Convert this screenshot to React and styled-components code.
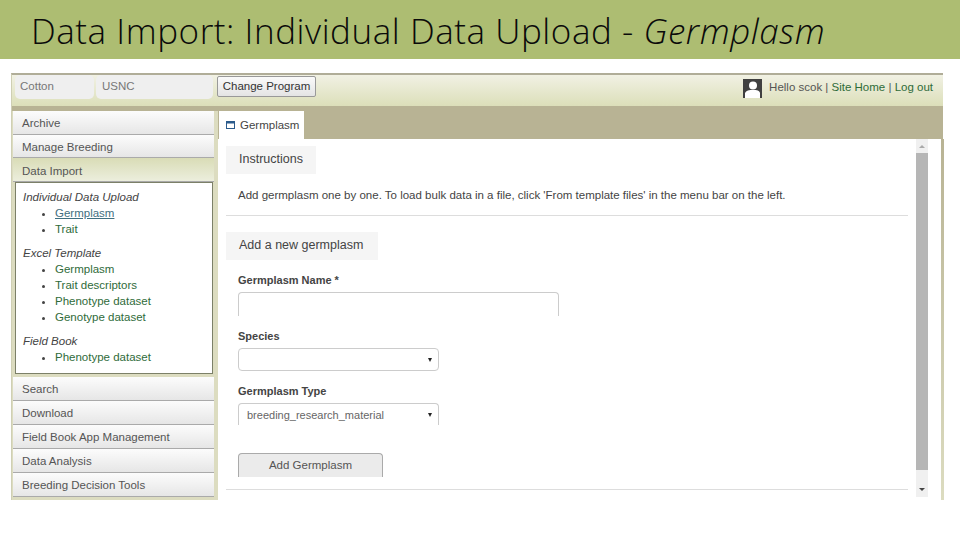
import React from 'react';
import styled, { createGlobalStyle } from 'styled-components';

const GlobalStyle = createGlobalStyle`
  html, body {
    margin: 0;
    padding: 0;
    background: #fff;
  }
  * {
    box-sizing: border-box;
  }
`;

const Slide = styled.div`
  width: 960px;
  height: 540px;
  overflow: hidden;
  background: #fff;
  font-family: "Liberation Sans", Arial, sans-serif;
  color: #333;
`;

const TitleBar = styled.header`
  height: 59px;
  background: #adbd72;
  padding-left: 31px;
  font-family: "Open Sans", sans-serif;
  font-weight: 300;
  font-size: 35px;
  letter-spacing: 0.55px;
  line-height: 62px;
  color: #0a0a0a;
  white-space: nowrap;
  em {
    font-style: italic;
  }
`;

const Shot = styled.div`
  width: 932px;
  height: 427px;
  margin: 14px 0 0 11px;
  border-top: 2px solid #b0ad98;
  border-left: 1px solid #cfcfb4;
  background: #dcdcc0;
  display: flex;
  flex-direction: column;
`;

const TopBar = styled.div`
  height: 31px;
  flex: none;
  display: flex;
  align-items: flex-start;
  padding-left: 3px;
  background: linear-gradient(#f1f1e4, #dcdfb9);
  font-size: 11.5px;
`;

const ProgramField = styled.div`
  width: ${(p) => p.$width}px;
  height: 24px;
  margin-right: 2px;
  padding: 5px 0 0 ${(p) => p.$pad}px;
  background: #efefef;
  border-radius: 5px;
  color: #777;
`;

const ChangeButton = styled.div`
  width: 99px;
  height: 21px;
  margin: 1px 0 0 2px;
  text-align: center;
  line-height: 19px;
  background: linear-gradient(#fafafa, #e4e4e4);
  border: 1px solid #999;
  border-radius: 2px;
  color: #333;
`;

const UserBox = styled.div`
  margin-left: auto;
  display: flex;
  align-items: flex-start;
  gap: 7px;
  padding: 4px 10px 0 0;
  color: #555;
  span {
    margin-top: 2px;
  }
  a {
    color: #2f6b3a;
  }
`;

const Columns = styled.div`
  flex: 1;
  min-height: 0;
  display: flex;
`;

const Sidebar = styled.nav`
  width: 206px;
  flex: none;
  padding-top: 5px;
  display: flex;
  flex-direction: column;
  background: linear-gradient(#b8b394 0 5px, #dcdcc0 5px);
`;

const SectionHead = styled.div`
  height: ${(p) => (p.$tall ? 24 : 23.5)}px;
  flex: none;
  margin: 0 4px 0 1px;
  padding: ${(p) => (p.$open ? 7 : 6)}px 0 0 9px;
  border-bottom: 1px solid #aaa;
  background: ${(p) =>
    p.$open
      ? 'linear-gradient(#d9dcb6, #eceedd)'
      : 'linear-gradient(#fcfcfc, #e6e6e6)'};
  color: #555;
  font-size: 11.5px;
`;

const MenuPanel = styled.div`
  width: 198px;
  height: 192px;
  flex: none;
  margin: 0 0 3px 3px;
  padding: 6px 0 0 7px;
  background: #fff;
  border: 1px solid #7c8068;
  font-size: 11.5px;
  line-height: 16px;
`;

const MenuTitle = styled.div`
  font-style: italic;
  color: #444;
  margin-top: ${(p) => (p.$first ? 0 : 8)}px;
`;

const MenuList = styled.ul`
  margin: 0;
  padding: 0 0 0 32px;
  list-style: disc;
  color: #444;
  a {
    color: #2f6b3a;
  }
  a.active {
    color: #3f6f80;
    text-decoration: underline;
  }
`;

const Main = styled.main`
  flex: 1;
  min-width: 0;
  display: flex;
  flex-direction: column;
`;

const TabStrip = styled.div`
  height: 33px;
  flex: none;
  padding: 5px 0 0 1px;
  background: #b8b394;
`;

const Tab = styled.div`
  width: 85px;
  height: 28px;
  display: flex;
  align-items: center;
  gap: 5px;
  padding-left: 7px;
  background: #fff;
  color: #444;
  font-size: 11.5px;
`;

const Pane = styled.div`
  flex: 1;
  min-height: 0;
  display: flex;
  background: #fff;
  border-right: 3px solid #b8b394;
  border-image: linear-gradient(#b8b394, #dcdcc0) 1;
  margin-right: -1px;
`;

const PaneContent = styled.div`
  flex: 1;
  min-width: 0;
  padding: 7px 8px 0 8px;
`;

const Panel = styled.section`
  height: ${(p) => p.$height}px;
  border-bottom: 1px solid #ddd;
  margin-bottom: ${(p) => p.$gap || 0}px;
`;

const PanelTitle = styled.div`
  width: ${(p) => p.$width}px;
  height: 28px;
  padding: 6px 0 0 13px;
  background: #f5f5f5;
  color: #444;
  font-size: 12.5px;
`;

const PanelText = styled.p`
  margin: 0;
  padding: 15px 0 0 12px;
  color: #444;
  font-size: 11.5px;
  white-space: nowrap;
`;

const Form = styled.div`
  padding: 0 0 0 12px;
`;

const Label = styled.div`
  font-weight: bold;
  font-size: 11px;
  line-height: 14px;
  color: #444;
  margin: ${(p) => p.$top}px 0 5px;
`;

const Input = styled.div`
  width: 321px;
  height: 24px;
  border: 1px solid #ccc;
  border-bottom: 0;
  border-radius: 4px 4px 0 0;
`;

const Select = styled.div`
  width: 201px;
  height: ${(p) => (p.$cut ? 22 : 23)}px;
  display: flex;
  align-items: center;
  padding: 0 6px 0 8px;
  border: 1px solid #ccc;
  border-bottom: ${(p) => (p.$cut ? 0 : '1px solid #ccc')};
  border-radius: ${(p) => (p.$cut ? '4px 4px 0 0' : '4px')};
  color: #666;
  font-size: 11px;
  &::after {
    content: '';
    margin-left: auto;
    border-left: 2.5px solid transparent;
    border-right: 2.5px solid transparent;
    border-top: 4px solid #222;
  }
`;

const AddButton = styled.div`
  width: 145px;
  height: 24px;
  margin-top: 28px;
  text-align: center;
  line-height: 23px;
  background: #ebebeb;
  border: 1px solid #aaa;
  border-bottom: 0;
  border-radius: 4px 4px 0 0;
  color: #555;
  font-size: 11.5px;
`;

const Scrollbar = styled.div`
  width: 12px;
  flex: none;
  margin-right: 13px;
  height: 358px;
  display: flex;
  flex-direction: column;
  background: #f0f0f0;
`;

const ScrollArrow = styled.div`
  height: ${(p) => (p.$down ? 27 : 14)}px;
  flex: none;
  display: flex;
  justify-content: center;
  align-items: ${(p) => (p.$down ? 'flex-end' : 'center')};
  padding-bottom: ${(p) => (p.$down ? 6 : 0)}px;
  &::after {
    content: '';
    border-left: 3px solid transparent;
    border-right: 3px solid transparent;
    ${(p) => (p.$down ? 'border-top: 3px solid #444;' : 'border-bottom: 3px solid #aaa;')}
  }
`;

const ScrollThumb = styled.div`
  flex: 1;
  background: #b6b6b6;
`;

const WindowIcon = () => (
  <svg width="9" height="8" viewBox="0 0 9 8">
    <rect x="0.5" y="0.5" width="8" height="7" fill="#fff" stroke="#2b5b8c" />
    <rect x="0" y="0" width="9" height="2.5" fill="#2b5b8c" />
  </svg>
);

const AvatarIcon = () => (
  <svg width="19" height="19" viewBox="0 0 19 19">
    <rect width="19" height="19" fill="#404040" />
    <circle cx="10" cy="6.5" r="4" fill="#fff" />
    <path d="M2 19 L2 14 C3 11.5 6 11 10 11 C14 11 16.5 11.5 17 14 L17 19 Z" fill="#fff" />
  </svg>
);

const excelLinks = ['Germplasm', 'Trait descriptors', 'Phenotype dataset', 'Genotype dataset'];
const lowerSections = ['Search', 'Download', 'Field Book App Management', 'Data Analysis', 'Breeding Decision Tools'];

export default function App() {
  return (
    <Slide>
      <GlobalStyle />
      <TitleBar>
        Data Import: Individual Data Upload - <em>Germplasm</em>
      </TitleBar>
      <Shot>
        <TopBar>
          <ProgramField $width={79} $pad={5}>Cotton</ProgramField>
          <ProgramField $width={117} $pad={6}>USNC</ProgramField>
          <ChangeButton>Change Program</ChangeButton>
          <UserBox>
            <AvatarIcon />
            <span>
              Hello scok | <a>Site Home</a> | <a>Log out</a>
            </span>
          </UserBox>
        </TopBar>
        <Columns>
          <Sidebar>
            <SectionHead>Archive</SectionHead>
            <SectionHead>Manage Breeding</SectionHead>
            <SectionHead $open>Data Import</SectionHead>
            <MenuPanel>
              <MenuTitle $first>Individual Data Upload</MenuTitle>
              <MenuList>
                <li><a className="active">Germplasm</a></li>
                <li><a>Trait</a></li>
              </MenuList>
              <MenuTitle>Excel Template</MenuTitle>
              <MenuList>
                {excelLinks.map((l) => (
                  <li key={l}><a>{l}</a></li>
                ))}
              </MenuList>
              <MenuTitle>Field Book</MenuTitle>
              <MenuList>
                <li><a>Phenotype dataset</a></li>
              </MenuList>
            </MenuPanel>
            {lowerSections.map((s) => (
              <SectionHead key={s} $tall>{s}</SectionHead>
            ))}
          </Sidebar>
          <Main>
            <TabStrip>
              <Tab>
                <WindowIcon />
                Germplasm
              </Tab>
            </TabStrip>
            <Pane>
              <PaneContent>
                <Panel $height={70} $gap={16}>
                  <PanelTitle $width={90}>Instructions</PanelTitle>
                  <PanelText>
                    Add germplasm one by one. To load bulk data in a file, click 'From template files' in the menu bar on the left.
                  </PanelText>
                </Panel>
                <Panel $height={258}>
                  <PanelTitle $width={152}>Add a new germplasm</PanelTitle>
                  <Form>
                    <Label $top={13}>Germplasm Name *</Label>
                    <Input />
                    <Label $top={13}>Species</Label>
                    <Select />
                    <Label $top={13}>Germplasm Type</Label>
                    <Select $cut>breeding_research_material</Select>
                    <AddButton>Add Germplasm</AddButton>
                  </Form>
                </Panel>
              </PaneContent>
              <Scrollbar>
                <ScrollArrow />
                <ScrollThumb />
                <ScrollArrow $down />
              </Scrollbar>
            </Pane>
          </Main>
        </Columns>
      </Shot>
    </Slide>
  );
}
